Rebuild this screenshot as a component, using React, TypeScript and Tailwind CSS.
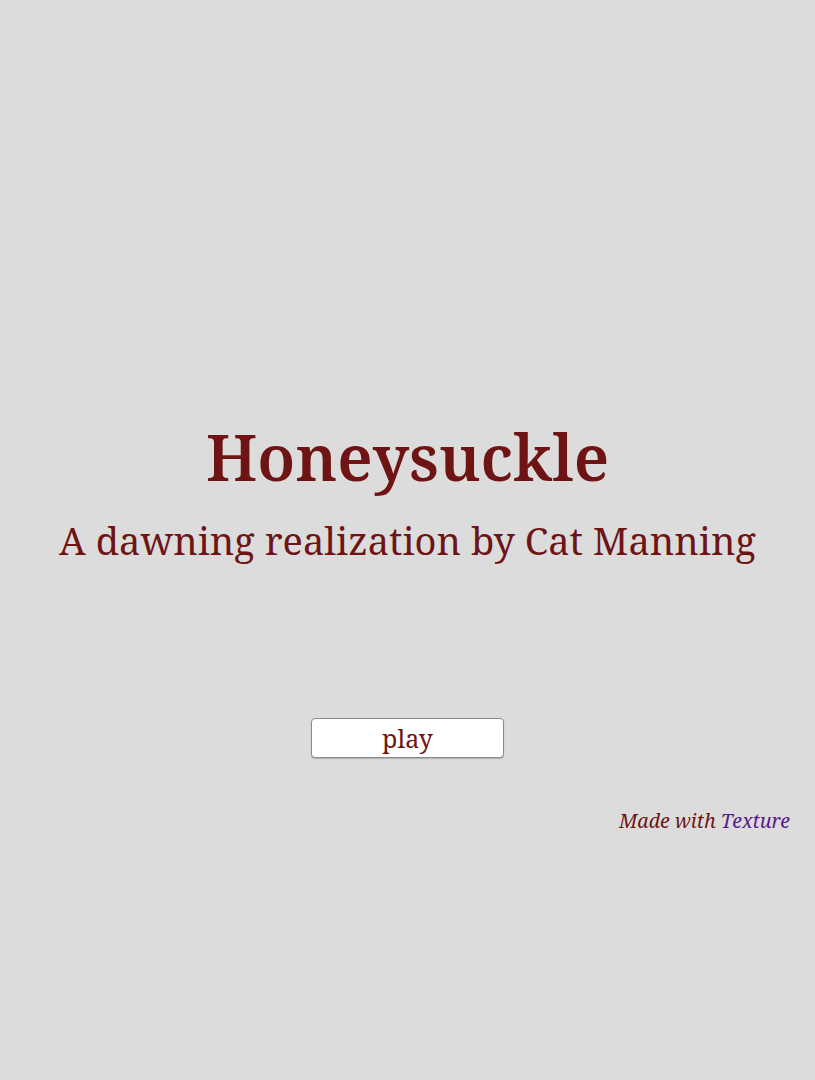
export default function App() {
  return (
    <div className="min-h-[1080px] w-full bg-[#dcdcdc] text-[#6f1414]" style={{ fontFamily: '"Noto Serif", "DejaVu Serif", serif' }}>
      <div className="flex flex-col items-center pt-[415px]">
        <h1 className="text-[63.5px] font-semibold leading-[84px]">Honeysuckle</h1>
        <p className="mt-[13px] text-[38px] leading-[56px]">A dawning realization by Cat Manning</p>
        <button className="mt-[150px] h-[40px] w-[193px] rounded-[4px] border border-[#8a8a8a] bg-white text-[25px] leading-none text-[#6f1414] shadow-[0_1px_1px_rgba(0,0,0,0.2)]">
          play
        </button>
      </div>
      <div className="mt-[48px] pr-[25px] text-right text-[19.6px] italic">
        Made with <span className="text-[#551a8b]">Texture</span>
      </div>
    </div>
  );
}
